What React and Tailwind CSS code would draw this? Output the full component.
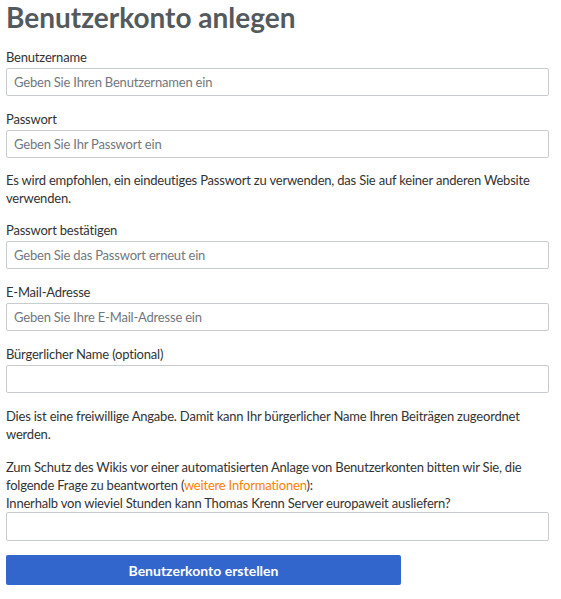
import React from 'react';

const Field = ({ label, placeholder, type = 'text' }) => (
  <div className="mt-[14px]">
    <label className="block leading-[19px] text-[#333]">{label}</label>
    <input
      type={type}
      placeholder={placeholder}
      className="mt-[1px] block w-full h-[28px] px-[7px] border border-[#c8ccd1] rounded-[2px] bg-white text-[13px] tracking-[-0.2px] text-[#333] placeholder:text-[#72777d] outline-none"
    />
  </div>
);

const App = () => {
  return (
    <div className="w-[561px] h-[599px] bg-white pl-[6px] pr-[12px] text-[13px] tracking-[-0.2px] font-['Lato','Liberation_Sans',sans-serif] text-[#333]">
      <h1 className="pt-[1px] text-[28px] leading-[33px] tracking-normal font-bold text-[#54595d]">
        Benutzerkonto anlegen
      </h1>

      <Field label="Benutzername" placeholder="Geben Sie Ihren Benutzernamen ein" />
      <Field label="Passwort" placeholder="Geben Sie Ihr Passwort ein" type="password" />

      <p className="mt-[13px] leading-[18px]">
        Es wird empfohlen, ein eindeutiges Passwort zu verwenden, das Sie auf keiner anderen Website
        verwenden.
      </p>

      <Field label="Passwort bestätigen" placeholder="Geben Sie das Passwort erneut ein" type="password" />
      <Field label="E-Mail-Adresse" placeholder="Geben Sie Ihre E-Mail-Adresse ein" />
      <Field label="Bürgerlicher Name (optional)" placeholder="" />

      <p className="mt-[14px] leading-[18px]">
        Dies ist eine freiwillige Angabe. Damit kann Ihr bürgerlicher Name Ihren Beiträgen zugeordnet
        werden.
      </p>

      <div className="mt-[15px]">
        <p className="leading-[18px]">
          Zum Schutz des Wikis vor einer automatisierten Anlage von Benutzerkonten bitten wir Sie, die
          folgende Frage zu beantworten (<a href="#" className="text-[#ff8000]">weitere Informationen</a>):
          <br />
          Innerhalb von wieviel Stunden kann Thomas Krenn Server europaweit ausliefern?
        </p>
        <input
          type="text"
          className="block w-full h-[29px] px-[7px] border border-[#c8ccd1] rounded-[2px] bg-white outline-none"
        />
      </div>

      <button className="mt-[14px] w-[395px] h-[30px] bg-[#3366cc] rounded-[2px] text-white font-bold text-[14px] tracking-normal">
        Benutzerkonto erstellen
      </button>
    </div>
  );
};

export default App;
